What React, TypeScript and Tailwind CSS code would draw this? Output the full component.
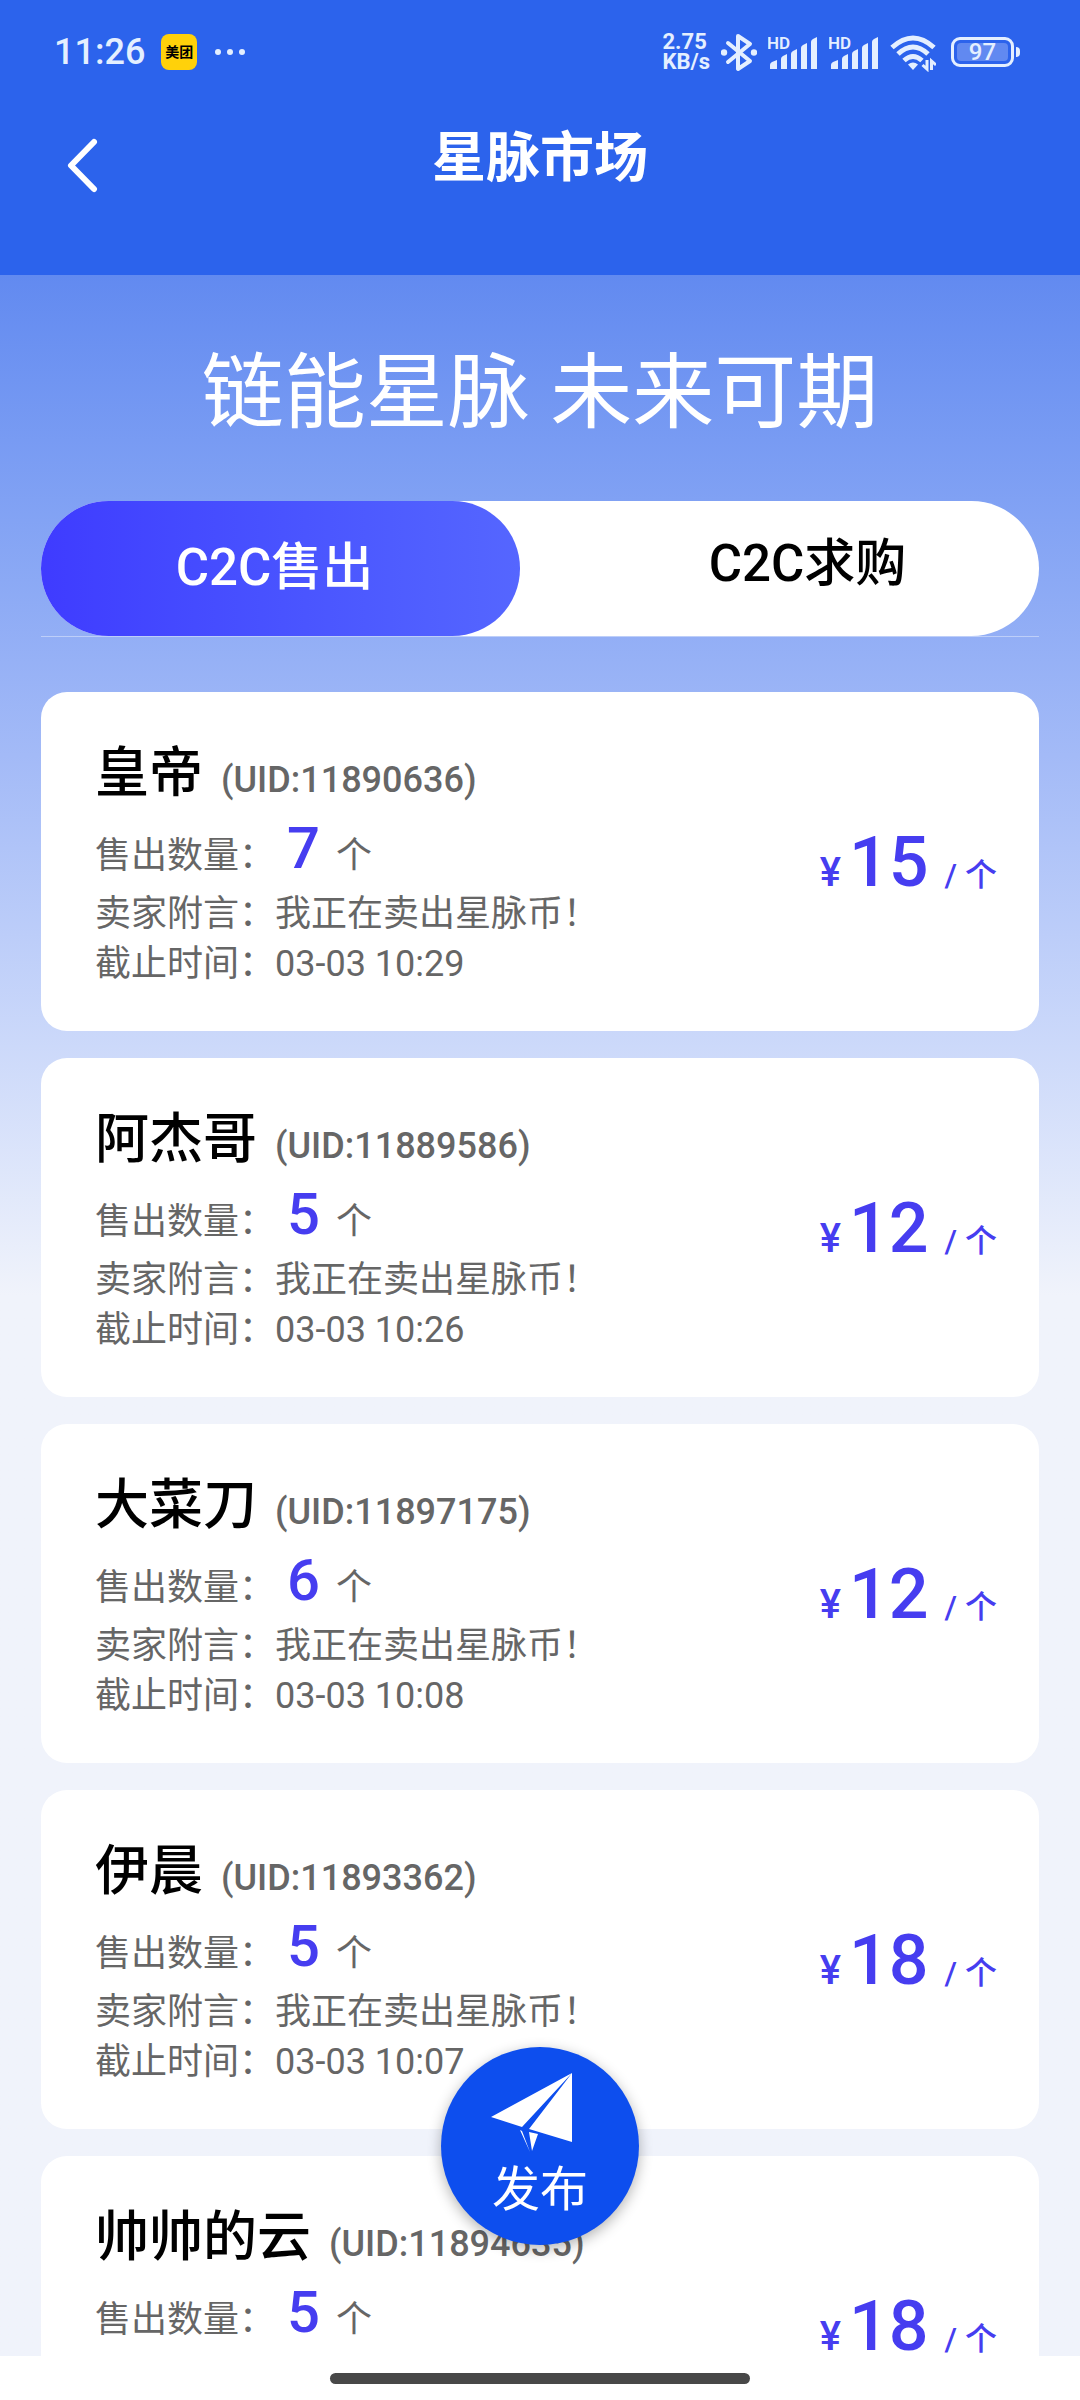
type Offer = {
  name: string;
  uid: string;
  amount: number;
  price: number;
  note?: string;
  deadline?: string;
};

const offers: Offer[] = [
  { name: '皇帝', uid: '11890636', amount: 7, price: 15, note: '我正在卖出星脉币！', deadline: '03-03 10:29' },
  { name: '阿杰哥', uid: '11889586', amount: 5, price: 12, note: '我正在卖出星脉币！', deadline: '03-03 10:26' },
  { name: '大菜刀', uid: '11897175', amount: 6, price: 12, note: '我正在卖出星脉币！', deadline: '03-03 10:08' },
  { name: '伊晨', uid: '11893362', amount: 5, price: 18, note: '我正在卖出星脉币！', deadline: '03-03 10:07' },
  { name: '帅帅的云', uid: '11894635', amount: 5, price: 18 },
];

function Signal() {
  return (
    <svg className="h-10 w-[50px]" viewBox="0 0 50 40" fill="currentColor">
      <text x="-1" y="17" fontSize="17" fontWeight="600">HD</text>
      <path d="M2 37v-4q0-2 2-3l5-2v9zM13 37V27q0-2 2-3l4-2v15zM23 37V22q0-2 2-3l4-2v20zM33 37V16q0-2 2-3l4-2v26zM43 37V10q0-2 2-3l4-2v32z" />
    </svg>
  );
}

function Bluetooth() {
  return (
    <svg className="h-10 w-9" viewBox="0 0 36 40" fill="none" stroke="currentColor" strokeWidth="4" strokeLinejoin="round" strokeLinecap="round">
      <path d="M7 11l22 18-12 8V4l12 8L7 30" />
      <circle cx="3" cy="20.5" r="3.200" fill="currentColor" stroke="none" />
      <circle cx="33" cy="20.5" r="3.200" fill="currentColor" stroke="none" />
    </svg>
  );
}

function Wifi() {
  return (
    <svg className="h-10 w-[46px]" viewBox="0 0 46 40" fill="none" stroke="currentColor" strokeWidth="5">
      <path d="M2 15.500Q23-3.500 44 15.500" />
      <path d="M8 22Q23 8 38 22" />
      <path d="M14 28.500q9-8 18 0" />
      <path d="M18 32.500q5-4 10 0L23 38z" fill="currentColor" stroke="none" />
      <path d="M37 28v9l-4.500-4M41.500 38v-9l4.500 4" strokeWidth="3" />
    </svg>
  );
}

function StatusBar() {
  return (
    <div className="flex h-[104px] items-center justify-between pr-[60px] pl-[54px] text-[#e4efff]">
      <div className="flex items-center">
        <span className="text-[36px] font-medium">11:26</span>
        <span className="ml-4 flex size-9 items-center justify-center rounded-lg bg-[#ffd10a] text-[14px] font-bold text-black">
          美团
        </span>
        <span className="ml-[18px] flex gap-1.5">
          <i className="size-1.5 rounded-full bg-current" />
          <i className="size-1.5 rounded-full bg-current" />
          <i className="size-1.5 rounded-full bg-current" />
        </span>
      </div>
      <div className="flex items-center gap-[11px]">
        <div className="text-[22px] leading-5 font-bold">
          2.75
          <br />
          KB/s
        </div>
        <Bluetooth />
        <Signal />
        <Signal />
        <Wifi />
        <div className="ml-1 flex items-center gap-0.5">
          <div className="flex h-[30px] w-[63px] rounded-[9px] border-3 border-current p-[3px]">
            <div className="flex flex-1 items-center justify-center rounded-sm bg-[#6189f1] text-[24px] leading-none font-medium">97</div>
          </div>
          <div className="h-2.5 w-1 rounded-r bg-current" />
        </div>
      </div>
    </div>
  );
}

function OfferCard({ offer }: { offer: Offer }) {
  return (
    <li className="flex h-[339px] shrink-0 items-center justify-between rounded-[26px] bg-white pr-[42px] pl-[54px]">
      <div className="self-start pt-[47px] text-[36px] leading-[50px] text-[#666]">
        <h2 className="flex items-baseline gap-[18px] leading-[70px]">
          <span className="text-[54px] font-medium text-black">{offer.name}</span>
          <span className="text-[36px] font-medium">(UID:{offer.uid})</span>
        </h2>
        <p className="flex items-baseline leading-[66px]">
          售出数量：
          <span className="ml-3 text-[58px] font-medium text-[#463df0]">{offer.amount}</span>
          <span className="ml-4">个</span>
        </p>
        {offer.note && <p>卖家附言：{offer.note}</p>}
        {offer.deadline && <p>截止时间：{offer.deadline}</p>}
      </div>
      <p className="flex items-baseline leading-none text-[#463df0]">
        <span className="text-[40px] font-medium">¥</span>
        <span className="ml-2 text-[70px] font-medium">{offer.price}</span>
        <span className="ml-4 text-[32px] font-medium">/ 个</span>
      </p>
    </li>
  );
}

export default function App() {
  return (
    <div className="flex h-screen flex-col bg-white font-[Roboto,'Noto_Sans_CJK_SC',sans-serif]">
      <header className="h-[275px] shrink-0 bg-[#2c63ec] text-white">
        <StatusBar />
        <div className="grid grid-cols-[1fr_auto_1fr] items-center px-[66px]">
          <button aria-label="返回" className="mt-3 w-fit">
            <svg className="h-14 w-8" viewBox="0 0 32 56" fill="none" stroke="currentColor" strokeWidth="6" strokeLinecap="round" strokeLinejoin="round">
              <path d="M28 5L5 28.500 28 52" />
            </svg>
          </button>
          <h1 className="text-[54px] leading-[110px] font-bold">星脉市场</h1>
        </div>
      </header>

      <main className="flex min-h-0 flex-1 flex-col overflow-hidden bg-[#f0f3fb] bg-linear-to-b from-[#628af0] via-[#a3baf7] via-[480px] to-[#f0f3fb] to-[1020px] px-[41px]">
        <p className="mt-[58px] text-center text-[82px] leading-[120px] text-white">链能星脉 未来可期</p>

        <div className="mt-12 shrink-0 border-b border-white/40">
          <div className="flex h-[135px] rounded-full bg-white text-[51px] font-medium">
            <button className="w-[48%] rounded-full bg-linear-to-r from-[#3f3bff] to-[#5566ff] pr-3 text-white">C2C售出</button>
            <button className="flex-1 pb-2 pl-14 text-black">C2C求购</button>
          </div>
        </div>

        <ul className="mt-[55px] flex flex-col gap-[27px]">
          {offers.map((offer) => (
            <OfferCard key={offer.uid} offer={offer} />
          ))}
        </ul>
      </main>

      <div className="flex h-11 shrink-0 items-center justify-center">
        <div className="h-[11px] w-[420px] rounded-full bg-[#484848]" />
      </div>

      <button className="fixed bottom-[155px] left-1/2 flex size-[198px] -translate-x-1/2 flex-col items-center rounded-full bg-[#0d4eee] pt-[25px] text-white shadow-[0_4px_14px_rgba(0,0,0,0.3)]">
        <svg className="mr-4 h-20 w-[84px]" viewBox="0 0 84 80" fill="currentColor">
          <path d="M82 1L1 45l31 10zM82 1L39 57l43 13zM39 60l9 2-6 17zM30 58l10 22-8-21z" />
        </svg>
        <span className="mt-2 text-[48px] leading-[60px]">发布</span>
      </button>
    </div>
  );
}
